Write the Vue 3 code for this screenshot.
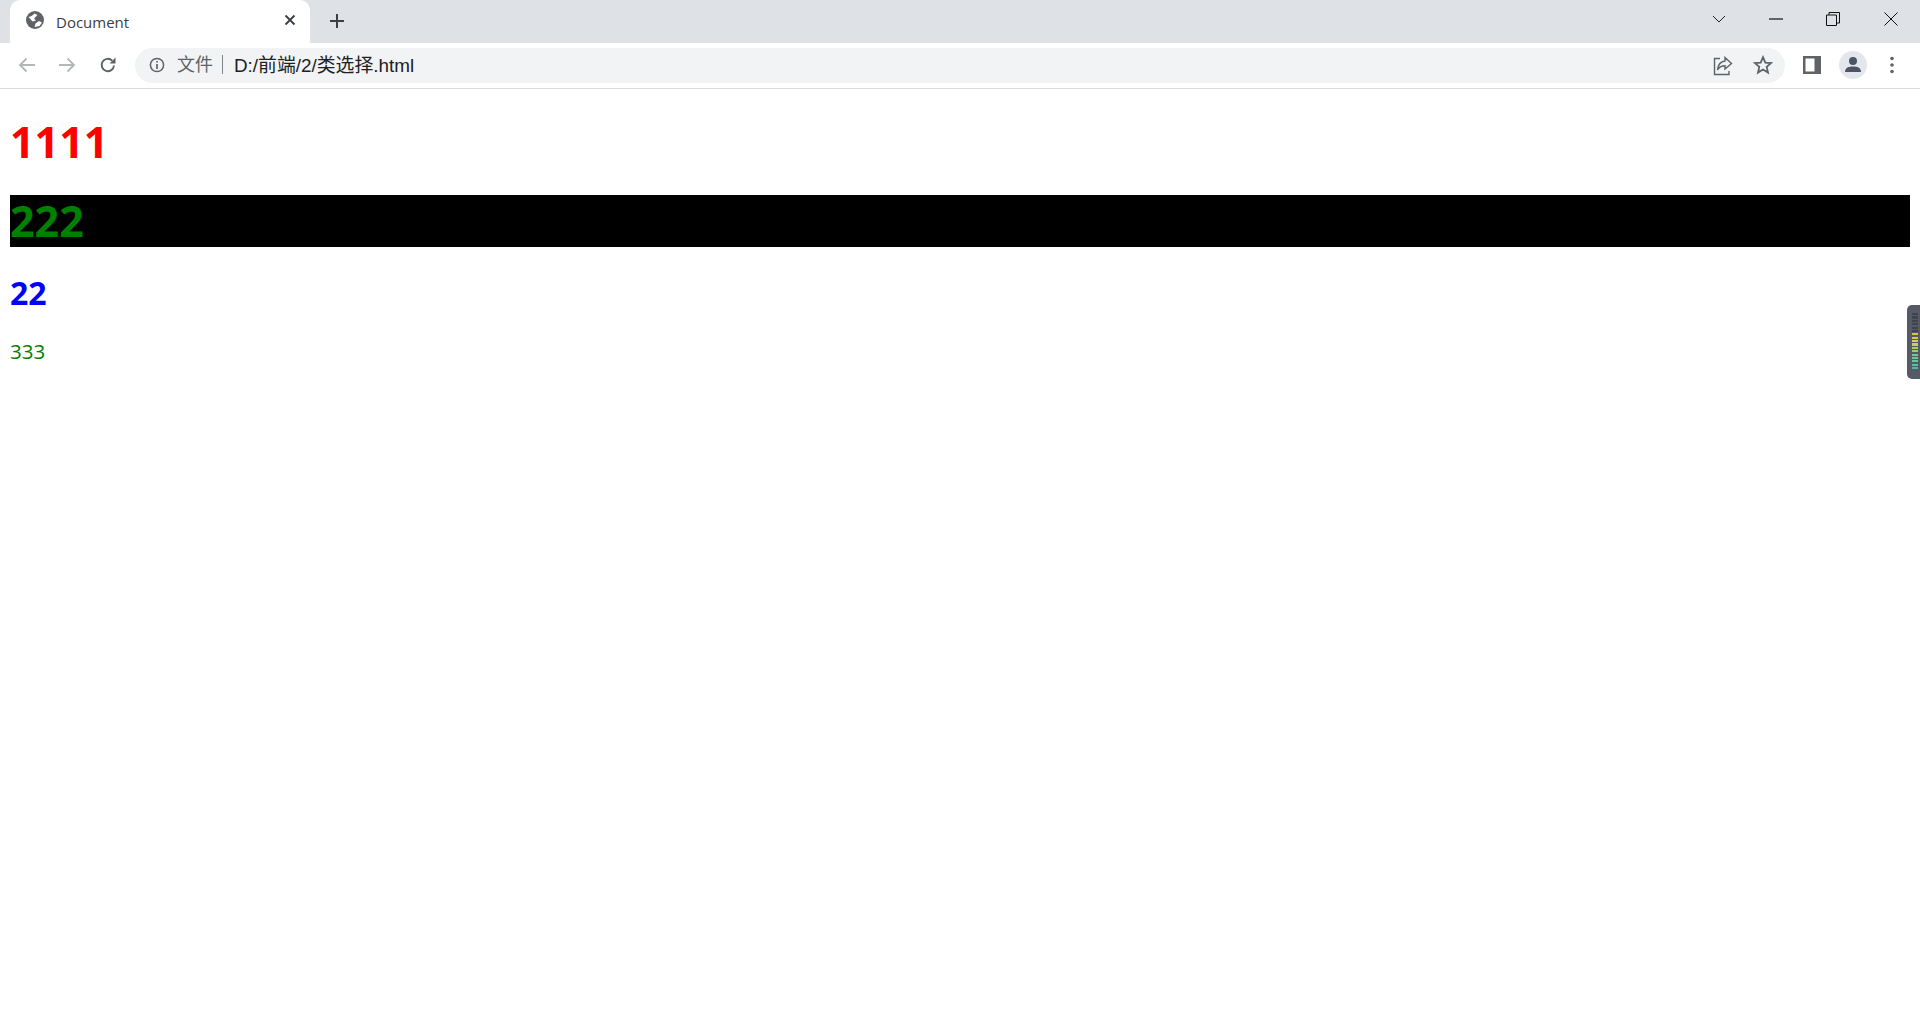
<script setup>
const meterColors = ['#3d4450','#3d4450','#3d4450','#3d4450','#3d4450','#3d4450','#d8c24a','#d8c850','#cfd060','#c4d060','#a8cc68','#98cc70','#80c880','#70c890','#60c8a0','#50c0a8','#48b8a8']
</script>

<template>
  <div class="page">
    <header class="tabstrip">
      <div class="tab">
        <svg class="globe" viewBox="0 0 18 18" width="18" height="18">
          <circle cx="9" cy="9" r="9" fill="#5f6368" />
          <path d="M2.5 6 C5 5.5 7 4.5 8.5 2.5 L11.5 4 L8 7.5 L10 9.5 L6.5 10.5 Z M8.5 16 L9.5 12.5 L13 10 L16 11.5 L13.5 15 Z" fill="#fff" />
        </svg>
        <span class="title">Document</span>
        <svg class="tabclose" viewBox="0 0 12 12" width="12" height="12">
          <path d="M1.5 1.5 L10.5 10.5 M10.5 1.5 L1.5 10.5" stroke="#3c4043" stroke-width="1.9" fill="none" />
        </svg>
      </div>
      <svg class="newtab" viewBox="0 0 16 16" width="16" height="16">
        <path d="M8 1 V15 M1 8 H15" stroke="#3c4043" stroke-width="2" fill="none" />
      </svg>
      <div class="winctrls">
        <svg viewBox="0 0 14 8" width="14" height="8" class="chev">
          <path d="M1 1 L7 7 L13 1" stroke="#222" stroke-width="1" fill="none" />
        </svg>
        <svg viewBox="0 0 14 2" width="14" height="2" class="min">
          <path d="M0 1 H14" stroke="#111" stroke-width="1.2" fill="none" />
        </svg>
        <svg viewBox="0 0 14 14" width="14" height="14" class="max">
          <path d="M0.5 3 H10.5 V13.5 H0.5 Z M3 3 V0.5 H13.5 V11 H10.5" stroke="#111" stroke-width="1" fill="none" />
        </svg>
        <svg viewBox="0 0 14 14" width="14" height="14" class="close">
          <path d="M0.5 0.5 L13.5 13.5 M13.5 0.5 L0.5 13.5" stroke="#111" stroke-width="1" fill="none" />
        </svg>
      </div>
    </header>

    <nav class="toolbar">
      <svg class="nav back" viewBox="0 0 18 16" width="18" height="16">
        <path d="M17 8 H2 M8.5 1.5 L2 8 L8.5 14.5" stroke="#b4b7ba" stroke-width="1.8" fill="none" />
      </svg>
      <svg class="nav fwd" viewBox="0 0 18 16" width="18" height="16">
        <path d="M1 8 H16 M9.5 1.5 L16 8 L9.5 14.5" stroke="#b4b7ba" stroke-width="1.8" fill="none" />
      </svg>
      <svg class="nav reload" viewBox="0 0 18 18" width="18" height="18">
        <path d="M15 9.5 A6.2 6.2 0 1 1 13.2 4.6" stroke="#5f6368" stroke-width="1.9" fill="none" />
        <path d="M16.5 1.5 V7.5 H10.5 Z" fill="#5f6368" />
      </svg>
      <div class="omnibox">
        <svg class="info" viewBox="0 0 16 16" width="16" height="16">
          <circle cx="8" cy="8" r="6.6" stroke="#5f6368" stroke-width="1.5" fill="none" />
          <path d="M8 7 V12 M8 4 V5.6" stroke="#5f6368" stroke-width="1.7" fill="none" />
        </svg>
        <span class="scheme">文件</span>
        <span class="sep"></span>
        <span class="url">D:/前端/2/类选择.html</span>
        <svg class="share" viewBox="0 0 20 20" width="20" height="20">
          <path d="M7 2.5 H1.5 V18.5 H16 V15" stroke="#5f6368" stroke-width="1.4" fill="none" />
          <path d="M12 1.5 L18.5 7.5 L12 13 V9.8 C8.5 9.8 6 11 4.5 14 C5 9 8 5.5 12 5 Z" stroke="#5f6368" stroke-width="1.4" fill="none" />
        </svg>
        <svg class="star" viewBox="0 0 20 20" width="20" height="20">
          <path d="M10 2.2 L12.3 7.6 L18 8.1 L13.7 11.9 L15 17.6 L10 14.6 L5 17.6 L6.3 11.9 L2 8.1 L7.7 7.6 Z" stroke="#5f6368" stroke-width="1.8" fill="none" />
        </svg>
      </div>
      <svg class="sidepanel" viewBox="0 0 18 18" width="18" height="18">
        <rect width="18" height="18" fill="#5f6368" />
        <rect x="2.5" y="2.5" width="9" height="13" fill="#fff" />
      </svg>
      <div class="avatar">
        <svg viewBox="0 0 20 20" width="20" height="20">
          <circle cx="10" cy="6" r="4" fill="#4b5563" />
          <path d="M2 17 C2 12.5 6 11.5 10 11.5 C14 11.5 18 12.5 18 17 Z" fill="#4b5563" />
        </svg>
      </div>
      <svg class="kebab" viewBox="0 0 4 18" width="4" height="18">
        <circle cx="2" cy="2.5" r="1.8" fill="#5f6368" />
        <circle cx="2" cy="9" r="1.8" fill="#5f6368" />
        <circle cx="2" cy="15.5" r="1.8" fill="#5f6368" />
      </svg>
    </nav>

    <main class="content">
      <h1 class="red">1111</h1>
      <h1 class="green">222</h1>
      <h2 class="blue">22</h2>
      <p class="small">333</p>
    </main>

    <aside class="ext">
      <div class="meter">
        <i v-for="(c, n) in meterColors" :key="n" :style="{ background: c }"></i>
      </div>
    </aside>
  </div>
</template>

<style>
html, body { margin: 0; background: #fff; }
</style>

<style scoped>
.page {
  position: relative;
  height: 1030px;
  overflow: hidden;
  background: #fff;
  font-family: "Open Sans", "Noto Sans CJK SC", sans-serif;
}
.tabstrip {
  height: 43px;
  background: #dee1e6;
  display: flex;
  align-items: center;
  padding-left: 10px;
}
.tab {
  width: 300px;
  height: 43px;
  background: #fff;
  border-radius: 10px 10px 0 0;
  display: flex;
  align-items: center;
  padding-left: 16px;
  box-sizing: border-box;
}
.globe { margin-top: -3px; }
.title {
  margin-left: 12px;
  font-size: 15px;
  color: #3c4043;
  width: 228px;
}
.tabclose { margin-top: -4px; }
.newtab { margin-left: 19px; margin-top: -2px; }
.winctrls {
  margin-left: auto;
  display: flex;
  align-items: center;
  margin-top: -6px;
  padding-right: 22px;
}
.chev { margin-right: 43px; }
.min { margin-right: 43px; }
.max { margin-right: 44px; }
.toolbar {
  height: 45px;
  border-bottom: 1px solid #dadce0;
  display: flex;
  align-items: center;
  background: #fff;
}
.nav { margin-top: -2px; }
.back { margin-left: 18px; }
.fwd { margin-left: 22px; }
.reload { margin-left: 23px; }
.omnibox {
  margin-left: 18px;
  width: 1650px;
  height: 35px;
  border-radius: 18px;
  background: #f1f3f4;
  display: flex;
  align-items: center;
  padding-left: 14px;
  box-sizing: border-box;
}
.info { margin-top: -1px; }
.scheme {
  margin-left: 12px;
  margin-top: -5px;
  font: 18px "Noto Sans CJK SC", sans-serif;
  color: #5f6368;
}
.sep {
  width: 1px;
  height: 19px;
  background: #80868b;
  margin: -2px 11px 0 9px;
}
.url {
  font: 18.85px "Liberation Sans", "Noto Sans CJK SC", sans-serif;
  color: #202124;
  flex: 1;
  margin-top: -5px;
}
.star { margin-left: 20px; margin-right: 12px; margin-top: -1px; }
.share { margin-right: 0; }
.sidepanel { margin-left: 18px; margin-top: -1px; }
.avatar {
  width: 28px;
  height: 28px;
  border-radius: 50%;
  background: #e3e6ec;
  margin-left: 18px;
  margin-top: -1px;
  display: flex;
  align-items: center;
  justify-content: center;
}
.kebab { margin-left: 23px; margin-top: -1px; }
.content {
  padding: 0 10px;
}
h1, h2, p { font-weight: 700; }
h1 {
  font-size: 43px;
  line-height: 52px;
  margin: 27px 0;
}
.red { color: #f00; }
.green { color: #008000; background: #000; }
.blue {
  color: #00f;
  font-size: 32px;
  line-height: 37px;
  margin: 0;
}
.small {
  color: #008000;
  font-size: 20.5px;
  font-weight: 400;
  line-height: 27px;
  margin: 26.5px 0 0;
}
.ext {
  position: absolute;
  top: 305px;
  right: 0;
  width: 13px;
  height: 74px;
  background: #555a66;
  border-radius: 5px 0 0 5px;
  padding-top: 8px;
  box-sizing: border-box;
}
.meter {
  margin-left: 5px;
  width: 6px;
  display: flex;
  flex-direction: column;
  gap: 1.2px;
}
.meter i { display: block; height: 2.2px; }
</style>
